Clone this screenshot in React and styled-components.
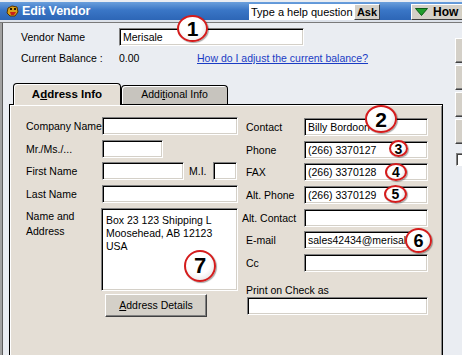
import React from 'react'
import styled, { createGlobalStyle } from 'styled-components'

const GlobalStyle = createGlobalStyle`
html, body {
  margin: 0;
  padding: 0;
  overflow: hidden;
}
body {
  font-family: "Liberation Sans", Arial, sans-serif;
  font-size: 10.5px;
  color: #000;
}
`

const AppIcon = () => (
    <svg width="13" height="12" viewBox="0 0 13 12">
        <path d="M2 3 L6 1 L11 2 L12 7 L9 11 L4 11 L1 8 Z" fill="#d9a21b" stroke="#5a3200" strokeWidth="1" />
        <rect x="4" y="3" width="2" height="2" fill="#2a1a00" />
        <rect x="8" y="3" width="2" height="2" fill="#2a1a00" />
        <path d="M4 7 L10 7 L8 10 L5 10 Z" fill="#c8201a" />
    </svg>
)

const GreenArrow = () => (
    <ArrowSvg width="13" height="8" viewBox="0 0 13 8">
        <polygon points="0.5,0.5 12.5,0.5 6.5,7.5" fill="#1f9d2c" stroke="#0d5c16" strokeWidth="1" />
    </ArrowSvg>
)

const Vendor = () => {
    return (
        <Window>
            <GlobalStyle />
            <TitleBar>
                <AppIcon />
                <TitleText>Edit Vendor</TitleText>
                <HelpBox>Type a help question</HelpBox>
                <AskButton>Ask</AskButton>
                <HowButton>
                    <GreenArrow />
                    <span>How Do I</span>
                </HowButton>
            </TitleBar>
            <Rule />
            <Body>
                <Frame />
                <Main>
                    <HeaderRow>
                        <HeaderLabel>Vendor Name</HeaderLabel>
                        <Field $w={185} defaultValue="Merisale" readOnly />
                    </HeaderRow>
                    <BalanceRow>
                        <HeaderLabel>Current Balance :</HeaderLabel>
                        <Balance>0.00</Balance>
                        <HelpLink href="#">How do I adjust the current balance?</HelpLink>
                    </BalanceRow>
                    <Tabs>
                        <Tab $active>A<u>d</u>dress Info</Tab>
                        <Tab>Addi<u>t</u>ional Info</Tab>
                    </Tabs>
                    <Panel>
                        <LeftGrid>
                            <Label>Company Name</Label>
                            <Field $w={136} readOnly />
                            <Label>Mr./Ms./...</Label>
                            <Field $w={61} readOnly />
                            <Label>First Name</Label>
                            <Inline>
                                <Field $w={82} readOnly />
                                <MiLabel>M.I.</MiLabel>
                                <Field $w={24} readOnly />
                            </Inline>
                            <Label>Last Name</Label>
                            <Field $w={136} readOnly />
                            <TopLabel>Name and<br />Address</TopLabel>
                            <AddressBox>{'Box 23 123 Shipping L\nMoosehead, AB 12123\nUSA'}</AddressBox>
                            <span />
                            <Button><u>A</u>ddress Details</Button>
                        </LeftGrid>
                        <RightCol>
                            <RightGrid>
                                <Label>Contact</Label>
                                <Field $w={124} defaultValue="Billy Bordoon" readOnly />
                                <Label>Phone</Label>
                                <Field $w={124} defaultValue="(266) 3370127" readOnly />
                                <Label>FAX</Label>
                                <Field $w={124} defaultValue="(266) 3370128" readOnly />
                                <Label>Alt. Phone</Label>
                                <Field $w={124} defaultValue="(266) 3370129" readOnly />
                                <Label $shift={-4}>Alt. Contact</Label>
                                <Field $w={124} readOnly />
                                <Label>E-mail</Label>
                                <Field $w={124} defaultValue="sales42434@merisale.com" readOnly />
                                <Label>Cc</Label>
                                <Field $w={124} readOnly />
                            </RightGrid>
                            <PrintLabel>Print on Check as</PrintLabel>
                            <PrintField $w={181} readOnly />
                        </RightCol>
                    </Panel>
                </Main>
                <Side>
                    <SideButton />
                    <SideButton />
                    <SideButton />
                    <SideButton />
                    <SideCheck />
                </Side>
            </Body>

            <Balloon $x={177} $y={15} $w={31} $h={27} $fs={21}>1</Balloon>
            <Balloon $x={365} $y={105} $w={32} $h={28} $fs={21}>2</Balloon>
            <Balloon $x={389} $y={140} $w={19} $h={17} $fs={14}>3</Balloon>
            <Balloon $x={385} $y={163} $w={22} $h={18} $fs={14}>4</Balloon>
            <Balloon $x={384} $y={185} $w={23} $h={18} $fs={14}>5</Balloon>
            <Balloon $x={405} $y={228} $w={27} $h={25} $fs={18}>6</Balloon>
            <Balloon $x={184} $y={250} $w={32} $h={32} $fs={22}>7</Balloon>
        </Window>
    )
}

const Window = styled.div`
position: relative;
width: 462px;
height: 355px;
overflow: hidden;
background-color: #eaedf2;
display: flex;
flex-direction: column;
`
const TitleBar = styled.div`
margin-top: 2px;
height: 18px;
flex-shrink: 0;
display: flex;
align-items: center;
padding-left: 6px;
background: linear-gradient(to bottom, #6a9fdc 0%, #3a76c6 45%, #2d66b6 100%);
border-bottom: 2px solid #dde2ea;
overflow: hidden;
`
const TitleText = styled.span`
margin-left: 3px;
color: #fff;
font-weight: bold;
font-size: 12.5px;
letter-spacing: -0.1px;
`
const HelpBox = styled.div`
margin-left: auto;
align-self: flex-end;
width: 105px;
height: 16px;
flex-shrink: 0;
box-sizing: border-box;
padding-left: 2px;
background: #fff;
font-size: 11px;
line-height: 16px;
white-space: nowrap;
overflow: hidden;
`
const AskButton = styled.div`
align-self: flex-end;
width: 26px;
height: 16px;
flex-shrink: 0;
box-sizing: border-box;
background: #d4d0c8;
border: 1px solid;
border-color: #fff #404040 #404040 #fff;
font-weight: bold;
font-size: 11px;
line-height: 14px;
text-align: center;
`
const HowButton = styled.div`
align-self: flex-end;
margin-left: 31px;
width: 51px;
height: 16px;
flex-shrink: 0;
box-sizing: border-box;
background: #d4d0c8;
border: 1px solid;
border-color: #fff #404040 #404040 #fff;
border-right: none;
display: flex;
align-items: center;
gap: 5px;
padding-left: 3px;
font-weight: bold;
font-size: 12px;
white-space: nowrap;
`
const ArrowSvg = styled.svg`
flex-shrink: 0;
`
const Rule = styled.div`
height: 1px;
flex-shrink: 0;
background: #7a7a7a;
`
const Body = styled.div`
flex: 1;
min-height: 0;
display: flex;
`
const Frame = styled.div`
width: 3px;
flex-shrink: 0;
background: linear-gradient(to right, #a2a2a2 0, #a2a2a2 2px, #5c5c5c 2px);
`
const Main = styled.div`
width: 452px;
flex-shrink: 0;
display: flex;
flex-direction: column;
`
const HeaderRow = styled.div`
margin-top: 5px;
padding-left: 18px;
height: 18px;
display: flex;
align-items: center;
`
const BalanceRow = styled.div`
margin-top: 5px;
padding-left: 18px;
height: 14px;
display: flex;
align-items: center;
`
const HeaderLabel = styled.span`
width: 98px;
flex-shrink: 0;
white-space: nowrap;
`
const Balance = styled.span`
width: 78px;
flex-shrink: 0;
`
const HelpLink = styled.a`
color: #1a3cc4;
text-decoration: underline;
white-space: nowrap;
`
const Tabs = styled.div`
margin-top: 18px;
height: 21px;
padding-left: 10px;
display: flex;
align-items: flex-end;
`
const Tab = styled.div`
position: relative;
z-index: ${({ $active }) => ($active ? 1 : 0)};
box-sizing: border-box;
width: ${({ $active }) => ($active ? 108 : 107)}px;
height: ${({ $active }) => ($active ? 22 : 19)}px;
margin-bottom: ${({ $active }) => ($active ? -1 : 0)}px;
background: ${({ $active }) => ($active ? '#e4ded5' : '#c7c4be')};
border: 1px solid #000;
border-bottom: none;
border-radius: 4px 4px 0 0;
box-shadow: inset 1px 1px 0 #fff;
font-weight: ${({ $active }) => ($active ? 'bold' : 'normal')};
font-size: ${({ $active }) => ($active ? 11.5 : 10.5)}px;
line-height: ${({ $active }) => ($active ? 20 : 16)}px;
text-align: center;
white-space: nowrap;
`
const Panel = styled.div`
margin-left: 6px;
width: 434px;
flex: 1;
box-sizing: border-box;
background: #e4ded5;
border: 1px solid #000;
border-bottom: none;
box-shadow: inset 1px 1px 0 #fff, inset -1px 0 0 #8a8a8a;
padding: 12px 0 0 16px;
display: flex;
gap: 8px;
`
const LeftGrid = styled.div`
display: grid;
grid-template-columns: 76px 136px;
grid-template-rows: 18px 18px 18px 18px 83px 23px;
row-gap: 4.7px;
align-content: start;
& > button {
  margin-top: -1.7px;
  margin-left: 3px;
}
`
const RightCol = styled.div`
margin-top: 1px;
display: flex;
flex-direction: column;
`
const RightGrid = styled.div`
display: grid;
grid-template-columns: 58px 124px;
grid-auto-rows: 18px;
row-gap: 4.7px;
`
const Label = styled.span`
display: flex;
align-items: center;
white-space: nowrap;
margin-left: ${({ $shift }) => $shift || 0}px;
`
const TopLabel = styled.span`
padding-top: 1px;
line-height: 15px;
`
const MiLabel = styled.span`
width: 24px;
margin-left: 5px;
flex-shrink: 0;
`
const Inline = styled.div`
display: flex;
align-items: center;
`
const Field = styled.input`
width: ${({ $w }) => $w}px;
height: 18px;
box-sizing: border-box;
margin: 0;
padding: 0 3px;
background: #fff;
border: 1px solid;
border-color: #808080 #fff #fff #808080;
box-shadow: inset 1px 1px 0 #000, inset -1px -1px 0 #d4d0c8;
font-family: inherit;
font-size: 10.5px;
color: #000;
outline: none;
`
const PrintLabel = styled.span`
margin-top: 11px;
line-height: 14px;
white-space: nowrap;
`
const PrintField = styled(Field)`
margin-left: 1px;
`
const AddressBox = styled.div`
margin-left: -1px;
width: 137px;
box-sizing: border-box;
padding: 5px 3px 0 4px;
background: #fff;
border: 1px solid;
border-color: #808080 #fff #fff #808080;
box-shadow: inset 1px 1px 0 #000, inset -1px -1px 0 #d4d0c8;
line-height: 13px;
white-space: pre;
overflow: hidden;
`
const Button = styled.button`
width: 102px;
height: 23px;
box-sizing: border-box;
padding: 0;
background: #d4d0c8;
border: 1px solid;
border-color: #fff #404040 #404040 #fff;
box-shadow: inset -1px -1px 0 #808080;
font-family: inherit;
font-size: 10.5px;
color: #000;
`
const Side = styled.div`
margin-top: 15px;
width: 40px;
flex-shrink: 0;
display: flex;
flex-direction: column;
gap: 2px;
`
const SideButton = styled.div`
height: 25px;
box-sizing: border-box;
background: #d4d0c8;
border: 1px solid;
border-color: #fff #404040 #404040 #fff;
box-shadow: inset -1px -1px 0 #808080;
`
const SideCheck = styled.div`
margin-top: 7px;
margin-left: 1px;
width: 13px;
height: 13px;
box-sizing: border-box;
background: #fff;
border: 1px solid;
border-color: #808080 #fff #fff #808080;
box-shadow: inset 1px 1px 0 #404040;
`
const Balloon = styled.div`
position: absolute;
left: ${({ $x }) => $x}px;
top: ${({ $y }) => $y}px;
width: ${({ $w }) => $w}px;
height: ${({ $h }) => $h}px;
box-sizing: border-box;
border-radius: 50%;
border: 2px solid #d41c1c;
background: radial-gradient(circle at 45% 40%, #ffffff 50%, #d8d8d8 100%);
box-shadow: 1px 1px 1px rgba(0, 0, 0, 0.35);
display: flex;
align-items: center;
justify-content: center;
font-family: "Liberation Sans", Arial, sans-serif;
font-weight: bold;
font-size: ${({ $fs }) => $fs}px;
line-height: 1;
color: #000;
`

export default Vendor
